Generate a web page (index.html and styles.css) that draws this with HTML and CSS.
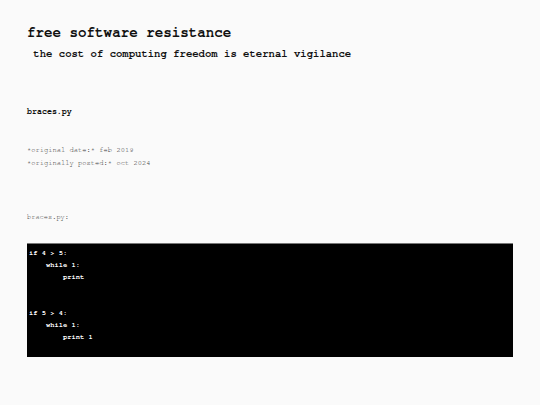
FILE: index.html
```html
<!DOCTYPE html>
<html>
<head>
<meta charset="utf-8">
<link rel="stylesheet" href="styles.css">
</head>
<body>
<header class="site">
  <h1 class="title">free software resistance</h1>
  <p class="tagline">&nbsp;the cost of computing freedom is eternal vigilance</p>
</header>
<main class="post">
  <h2 class="post-title">braces.py</h2>
  <div class="meta">
    <p>*original date:* feb 2019</p>
    <p>*originally posted:* oct 2024</p>
  </div>
  <p class="label">braces.py:</p>
  <pre class="code">if 4 &gt; 5:
    while 1:
        print


if 5 &gt; 4:
    while 1:
        print 1</pre>
</main>
</body>
</html>
```
FILE: styles.css
```css
html, body {
  margin: 0;
  padding: 0;
  background: #fafafa;
}
body {
  font-family: "FreeMono", "Liberation Mono", "Courier New", monospace;
  color: #111;
  padding: 0 27px;
}
.site {
  padding-top: 25px;
}
.title {
  margin: 0;
  font-size: 14.2px;
  font-weight: bold;
  line-height: 16px;
}
.tagline {
  margin: 7px 0 0 0;
  font-size: 10.6px;
  font-weight: bold;
  line-height: 12px;
}
.post {
  padding-top: 47px;
}
.post-title {
  margin: 0;
  font-size: 8.3px;
  font-weight: bold;
  line-height: 10px;
}
.meta {
  margin-top: 26px;
  color: #333;
  font-size: 7.1px;
  line-height: 13px;
}
.meta p {
  margin: 0;
}
.label {
  margin: 43px 0 0 0;
  color: #444;
  font-size: 7px;
  line-height: 10px;
}
.code {
  margin: 21px 0 0 0;
  background: #000;
  color: #fff;
  border-top: 1px solid #777;
  font-family: "FreeMono", "Liberation Mono", "Courier New", monospace;
  font-size: 7.1px;
  font-weight: bold;
  line-height: 12px;
  padding: 3px 2px 14px 2px;
  width: 482px;
  white-space: pre;
}
```
